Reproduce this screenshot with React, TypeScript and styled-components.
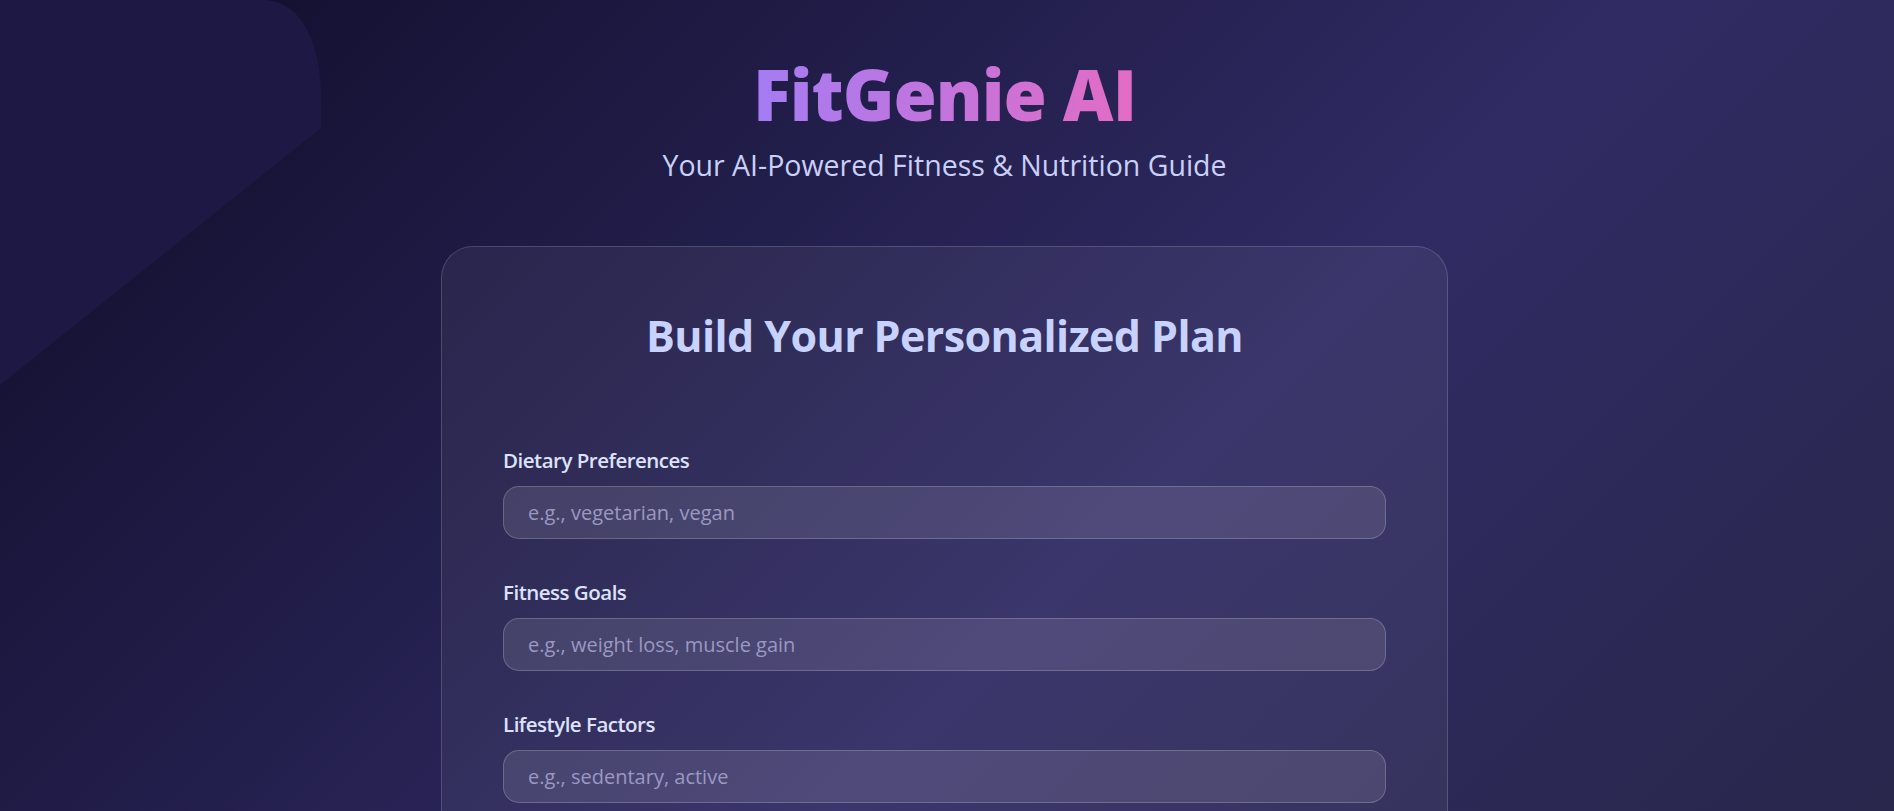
import React from "react";
import styled, { createGlobalStyle } from "styled-components";

const GlobalStyle = createGlobalStyle`
  html {
    scrollbar-width: none;
  }
  html::-webkit-scrollbar {
    display: none;
  }
  body {
    margin: 0;
    font-family: "Segoe UI", "Open Sans", "Noto Sans", sans-serif;
    background: #0f0c29;
  }
  * {
    box-sizing: border-box;
  }
`;

const Page = styled.div`
  position: relative;
  min-height: 1400px;
  display: flex;
  flex-direction: column;
  align-items: center;
  padding: 52px 5px 0 0;
  background: linear-gradient(135deg, #0f0c29 0%, #302b63 50%, #24243e 100%);
  overflow: hidden;
`;

const Blob = styled.svg`
  position: absolute;
  top: 0;
  left: 0;
  width: 330px;
  height: 390px;
`;

const Title = styled.h1`
  margin: 0;
  font-size: 70px;
  line-height: 84px;
  font-weight: 800;
  letter-spacing: -1px;
  background: linear-gradient(90deg, #a47cf3 0%, #e36cc5 100%);
  -webkit-background-clip: text;
  background-clip: text;
  color: transparent;
`;

const Subtitle = styled.p`
  margin: 10px 0 0;
  font-size: 28.5px;
  line-height: 39px;
  font-weight: 400;
  color: #c9d0f8;
`;

const Card = styled.div`
  margin-top: 61px;
  width: 1007px;
  padding: 62px 61px;
  border-radius: 32px;
  background: rgba(255, 255, 255, 0.055);
  border: 1px solid rgba(255, 255, 255, 0.16);
`;

const CardTitle = styled.h2`
  margin: 0 0 82px;
  text-align: center;
  font-size: 43px;
  line-height: 53px;
  font-weight: 700;
  letter-spacing: -0.6px;
  color: #c7d2fe;
`;

const Form = styled.form`
  display: flex;
  flex-direction: column;
  gap: 37px;
`;

const Field = styled.div`
  display: flex;
  flex-direction: column;
  gap: 9px;
`;

const Label = styled.label`
  font-size: 20.5px;
  line-height: 33px;
  font-weight: 600;
  letter-spacing: -0.5px;
  color: #dde2fb;
`;

const Input = styled.input`
  height: 53px;
  padding: 0 24px;
  border-radius: 16px;
  border: 1px solid rgba(255, 255, 255, 0.2);
  background: rgba(255, 255, 255, 0.1);
  color: #e0e7ff;
  font-family: inherit;
  font-size: 20px;
  outline: none;

  &::placeholder {
    color: #9b98c2;
  }
`;

const fields = [
  { id: "diet", label: "Dietary Preferences", placeholder: "e.g., vegetarian, vegan" },
  { id: "goals", label: "Fitness Goals", placeholder: "e.g., weight loss, muscle gain" },
  { id: "lifestyle", label: "Lifestyle Factors", placeholder: "e.g., sedentary, active" },
];

export default function App() {
  return (
    <>
      <GlobalStyle />
      <Page>
        <Blob viewBox="0 0 330 390">
          <path d="M0 0 H262 C300 0 321 40 321 100 V128 L0 385 Z" fill="#1e1944" />
        </Blob>
        <Title>FitGenie AI</Title>
        <Subtitle>Your AI-Powered Fitness &amp; Nutrition Guide</Subtitle>
        <Card>
          <CardTitle>Build Your Personalized Plan</CardTitle>
          <Form>
            {fields.map((f) => (
              <Field key={f.id}>
                <Label htmlFor={f.id}>{f.label}</Label>
                <Input id={f.id} placeholder={f.placeholder} />
              </Field>
            ))}
          </Form>
        </Card>
      </Page>
    </>
  );
}
